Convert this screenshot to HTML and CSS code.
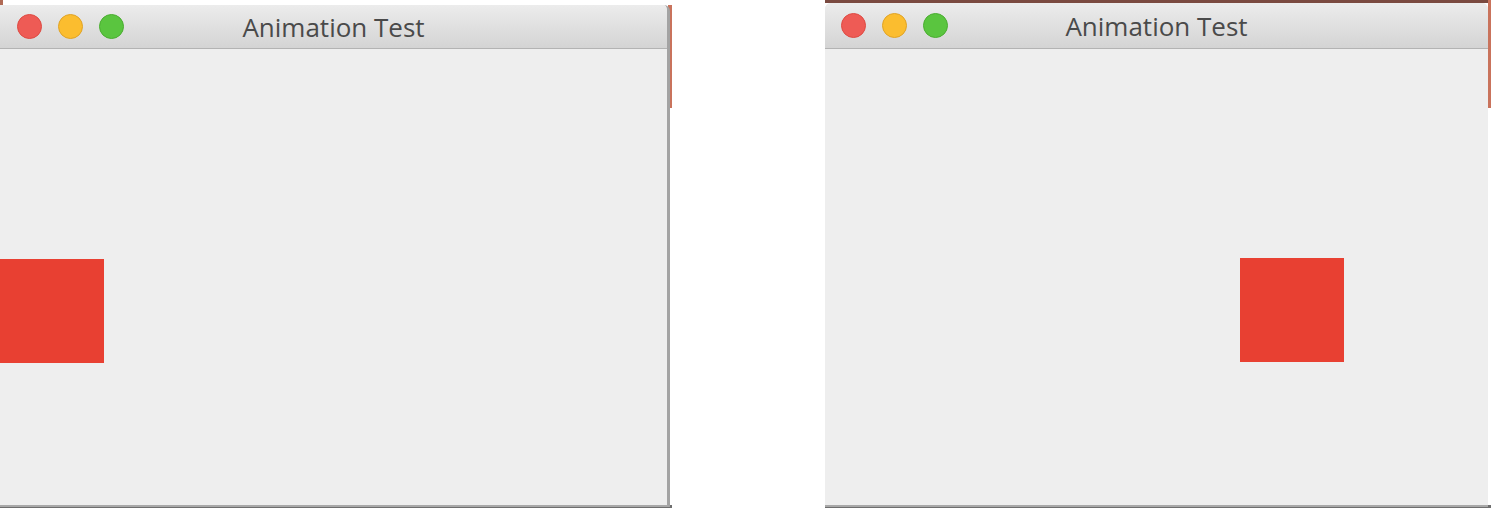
FILE: index.html
```html
<!DOCTYPE html>
<html lang="en">
  <head>
    <meta charset="UTF-8" />
    <meta name="viewport" content="width=device-width, initial-scale=1.0" />
    <title>Animation Test</title>

    <link rel="stylesheet" href="styles.css">
  </head>
  <body>
    <div class="desk desk-left">
      <div class="window window-left">
        <div class="titlebar">
          <div class="lights">
            <span class="light close"></span>
            <span class="light minimize"></span>
            <span class="light zoom"></span>
          </div>
          <div class="title">Animation Test</div>
          <div></div>
        </div>
        <div class="content">
          <div class="box box-start"></div>
        </div>
      </div>
    </div>

    <div class="desk desk-right">
      <div class="window window-right">
        <div class="titlebar">
          <div class="lights">
            <span class="light close"></span>
            <span class="light minimize"></span>
            <span class="light zoom"></span>
          </div>
          <div class="title">Animation Test</div>
          <div></div>
        </div>
        <div class="content">
          <div class="box box-end"></div>
        </div>
      </div>
    </div>
  </body>
</html>
```

FILE: styles.css
```css
body {
  margin: 0;
  background: #ffffff;
  display: flex;
  height: 508px;
  overflow: hidden;
}

.desk {
  height: 508px;
  box-sizing: border-box;
}

.desk-left {
  width: 672px;
  padding-top: 5px;
  background:
    linear-gradient(#c9735c, #c9735c) right 5px / 4px 103px no-repeat,
    linear-gradient(#6e6e6e, #6e6e6e) left bottom / 100% 3px no-repeat,
    linear-gradient(#b06a55, #b06a55) left top / 3px 5px no-repeat,
    #ffffff;
}

.desk-right {
  width: 666px;
  margin-left: 153px;
  padding-top: 3px;
  background:
    linear-gradient(#c9735c, #c9735c) right top / 3px 108px no-repeat,
    linear-gradient(#7a4a40, #7a4a40) left top / 100% 3px no-repeat,
    linear-gradient(#6e6e6e, #6e6e6e) left bottom / 100% 3px no-repeat,
    #ffffff;
}

.window {
  display: flex;
  flex-direction: column;
  background: #eeeeee;
  border-bottom: 2px solid #a8a8a8;
  border-radius: 6px 6px 0 0;
  overflow: hidden;
}

.window-left {
  width: 667px;
  height: 500px;
  border-right: 3px solid #a3a3a3;
  border-top-left-radius: 0;
}

.window-right {
  width: 663px;
  height: 502px;
}

.titlebar {
  display: grid;
  grid-template-columns: 1fr auto 1fr;
  align-items: center;
  height: 43px;
  flex-shrink: 0;
  background: linear-gradient(#ececec, #d4d4d4);
  border-bottom: 1px solid #b3b3b3;
}

.window-right .titlebar {
  height: 45px;
}

.lights {
  display: flex;
  gap: 16px;
  padding-left: 17px;
}

.window-right .lights {
  padding-left: 16px;
}

.light {
  width: 23px;
  height: 23px;
  border-radius: 50%;
  border: 1px solid;
}

.light.close {
  background: #ee5b55;
  border-color: #de4a42;
}

.light.minimize {
  background: #fbbd2f;
  border-color: #e0a325;
}

.light.zoom {
  background: #5ac53f;
  border-color: #4aad30;
}

.title {
  font-family: "Open Sans", Roboto, sans-serif;
  font-size: 26px;
  line-height: 30px;
  color: #4a4a4a;
  padding-top: 1px;
}

.content {
  flex: 1;
  background: #eeeeee;
  padding-top: 210px;
}

.box {
  width: 104px;
  height: 104px;
  background: #e84032;
}

.box-end {
  margin-left: 415px;
  margin-top: -1px;
}
```
